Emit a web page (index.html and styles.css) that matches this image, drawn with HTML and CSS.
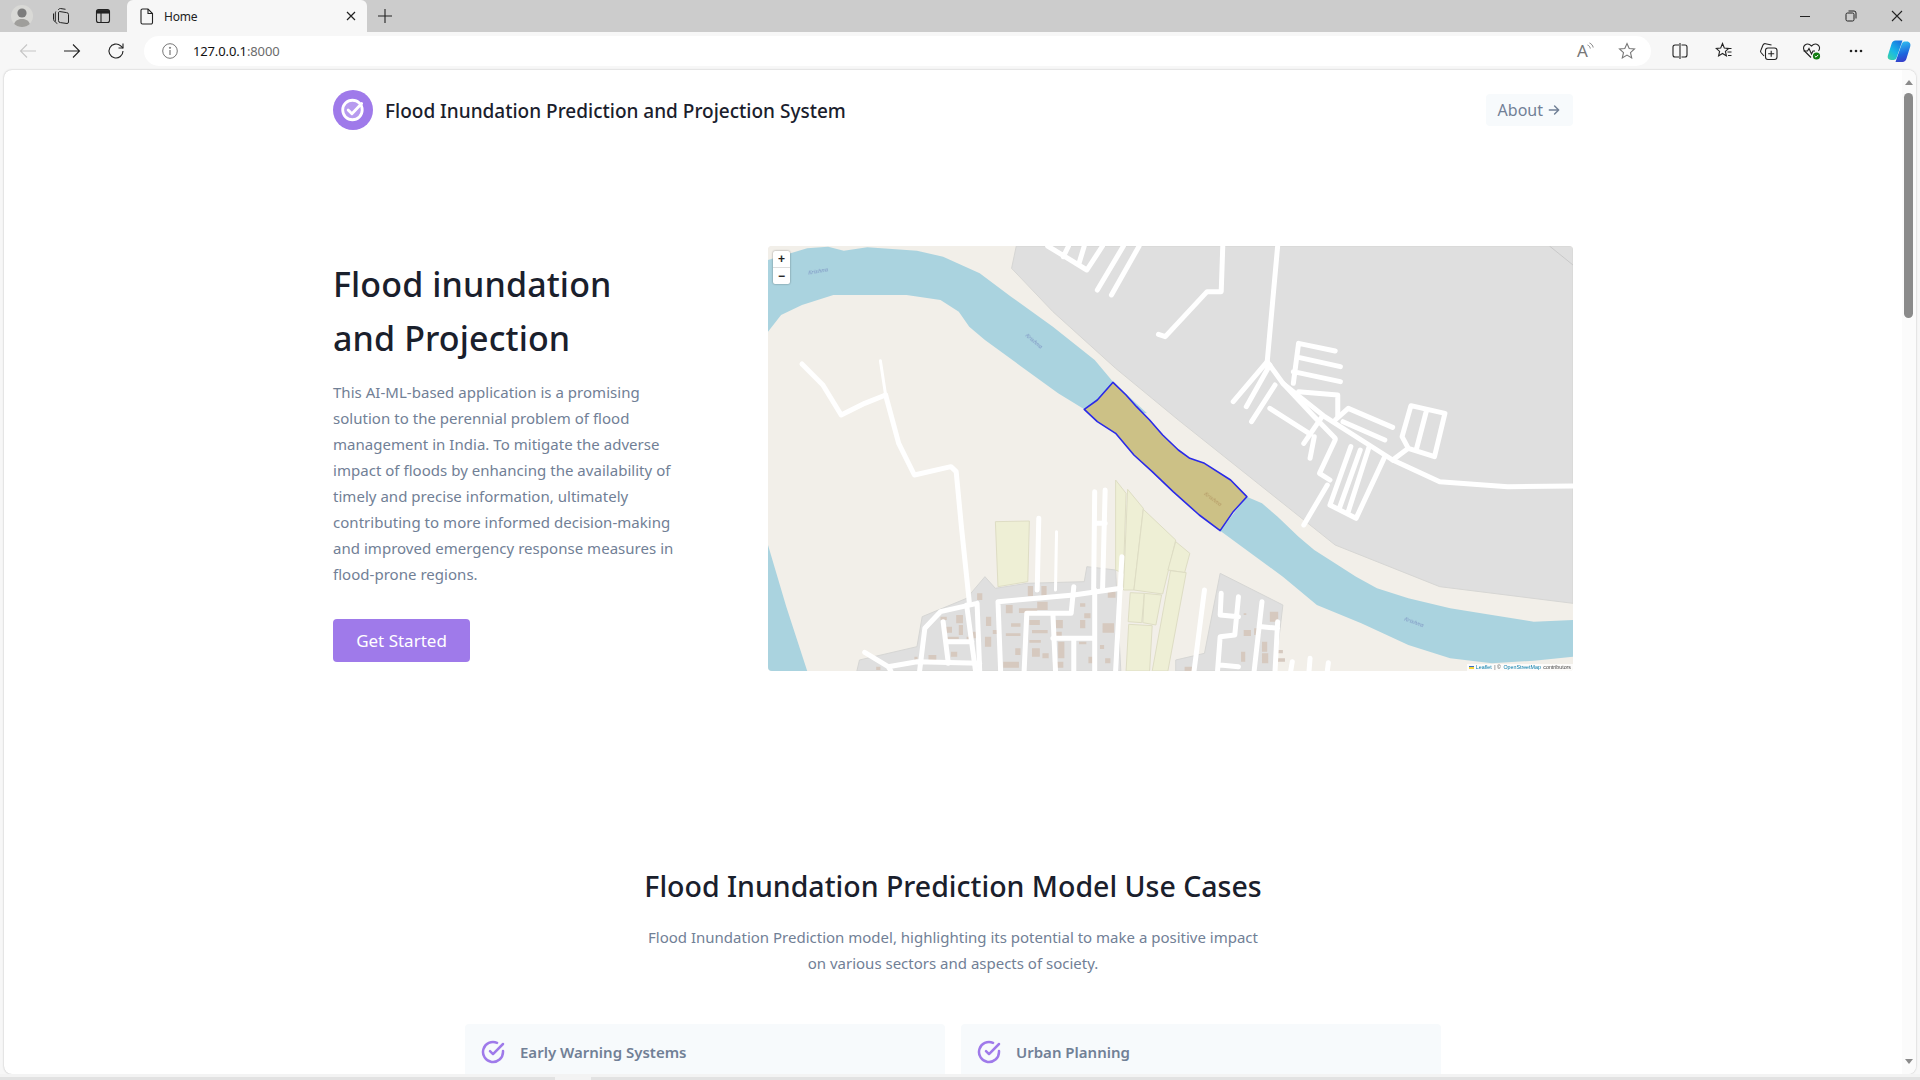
FILE: index.html
```html
<!DOCTYPE html>
<html lang="en">
<head>
<meta charset="utf-8">
<title>Home</title>
<link rel="stylesheet" href="styles.css">
</head>
<body>
<div class="browser">
  <div class="tabstrip">
    <div class="strip-btn">
      <svg width="24" height="24" viewBox="0 0 24 24"><circle cx="12" cy="12" r="11" fill="#d9d9d6"/><circle cx="12" cy="9" r="4.6" fill="#7c7c7c"/><path d="M4.2 20c1-3.6 4-5 7.800-5s6.800 1.400 7.800 5c-2 2-4.800 3-7.800 3s-5.800-1-7.800-3z" fill="#9f9e9b"/></svg>
    </div>
    <div class="strip-btn">
      <svg class="shift-left" width="18" height="18" viewBox="0 0 18 18" fill="none" stroke="#222" stroke-width="1"><path d="M1.500 6.500v6c0 1 .6 1.500 1.300 2M3.800 4.500c-.5 1-.5 1.500-.5 2.500v7.500c0 1 1 1.500 2 2"/><path d="M6.200 3c.5-1 1.300-1.500 2.300-1.500l5 .8"/><path d="M7.500 4.500l7 1.100a2 2 0 0 1 2 2v7.400a1.500 1.500 0 0 1-1.500 1.500l-6.500-.9a2 2 0 0 1-2-2V6a1.500 1.500 0 0 1 1-1.500z"/></svg>
    </div>
    <div class="strip-btn">
      <svg width="16" height="16" viewBox="0 0 16 16" fill="none" stroke="#222" stroke-width="1.100"><rect x="1.500" y="1.500" width="13" height="13" rx="2"/><path d="M2 3.800h12" stroke-width="3.500"/><path d="M6 5v9"/></svg>
    </div>
    <div class="tab">
      <svg class="tab-doc" width="14" height="17" viewBox="0 0 14 17" fill="none" stroke="#222" stroke-width="1.100"><path d="M2.500 1h5.500l4.500 4.500v9a1.500 1.500 0 0 1-1.500 1.500h-8.500a1.500 1.500 0 0 1-1.500-1.500v-12a1.500 1.500 0 0 1 1.500-1.500z"/><path d="M8 1v4.500h4.500"/></svg>
      <span class="tab-title">Home</span>
      <svg class="tab-close" width="10" height="10" viewBox="0 0 10 10" stroke="#222" stroke-width="1.200"><path d="M1 1l8 8M9 1l-8 8"/></svg>
    </div>
    <div class="newtab">
      <svg width="16" height="16" viewBox="0 0 16 16" stroke="#222" stroke-width="1.100"><path d="M8 1v14M1 8h14"/></svg>
    </div>
    <div class="winctl">
      <div class="win-btn"><svg width="12" height="12" viewBox="0 0 12 12" stroke="#222"><path d="M1 6.500h10"/></svg></div>
      <div class="win-btn"><svg width="12" height="12" viewBox="0 0 12 12" fill="none" stroke="#222"><rect x="1" y="3" width="8" height="8" rx="1.500"/><path d="M3.500 1h5.500a2 2 0 0 1 2 2v5.500"/></svg></div>
      <div class="win-btn"><svg width="12" height="12" viewBox="0 0 12 12" stroke="#222" stroke-width="1.100"><path d="M1 1l10 10M11 1l-10 10"/></svg></div>
    </div>
  </div>

  <div class="toolbar">
    <div class="nav">
      <div class="tool-btn"><svg width="18" height="18" viewBox="0 0 18 18" fill="none" stroke="#c6c6c6" stroke-width="1.100"><path d="M17 9H1.500M8 2.500 1.500 9 8 15.500"/></svg></div>
      <div class="tool-btn"><svg width="18" height="18" viewBox="0 0 18 18" fill="none" stroke="#222" stroke-width="1.100"><path d="M1 9h15.500M10 2.500 16.500 9 10 15.500"/></svg></div>
      <div class="tool-btn"><svg width="18" height="18" viewBox="0 0 18 18" fill="none" stroke="#222" stroke-width="1.100"><path d="M16 9a7 7 0 1 1-2.300-5.200L16 6"/><path d="M16 1.500V6h-4.500"/></svg></div>
    </div>
    <div class="address">
      <svg class="info" width="16" height="16" viewBox="0 0 16 16" fill="none" stroke="#777" stroke-width="1"><circle cx="8" cy="8" r="7.300"/><path d="M8 7v5" stroke-width="1.200"/><circle cx="8" cy="4.800" r=".6" fill="#777"/></svg>
      <span class="url">127.0.0.1<span class="url-port">:8000</span></span>
      <div class="addr-tools">
        <div class="aloud-wrap">
          <span class="aloud">A</span>
          <svg class="aloud-waves" width="8" height="9" viewBox="0 0 8 9" fill="none" stroke="#777" stroke-width=".9"><path d="M.5 3c1.500.5 2.500 1.800 2.800 3.500M2.500 1c2 .8 3.300 2.500 3.700 4.500"/></svg>
        </div>
        <svg width="18" height="18" viewBox="0 0 18 18" fill="none" stroke="#777" stroke-width="1.100"><path d="M9 1.500l2.200 5 5.300.5-4 3.600 1.200 5.300L9 13.100l-4.700 2.800 1.200-5.300-4-3.600 5.300-.5z"/></svg>
      </div>
    </div>
    <div class="tools">
      <div class="tool-btn"><svg width="16" height="16" viewBox="0 0 16 16" fill="none" stroke="#222" stroke-width="1.100"><path d="M7 2H3a2 2 0 0 0-2 2v8a2 2 0 0 0 2 2h4M9.500 2H13a2 2 0 0 1 2 2v8a2 2 0 0 1-2 2H9.500"/><path d="M8 0v16"/></svg></div>
      <div class="tool-btn"><svg width="18" height="18" viewBox="0 0 18 18" fill="none" stroke="#222" stroke-width="1.100"><path d="M7.500 1.500 9.300 6l4.400.4-3.300 3 1 4.500-3.900-2.400-3.900 2.400 1-4.500L1.200 6.400 5.700 6z"/><path d="M11.500 6.500h5M12.500 10h4M13 13.500h3.500"/></svg></div>
      <div class="tool-btn"><svg width="19" height="19" viewBox="0 0 19 19" fill="none" stroke="#222" stroke-width="1.100"><path d="M5 14 2 10.500a2 2 0 0 1 0-2.500L4 3c.5-1 1.500-1.500 2.500-1.300l6 1.300"/><rect x="6.500" y="6" width="11.500" height="11.500" rx="2.500"/><path d="M12.200 8.800v6M9.200 11.800h6"/></svg></div>
      <div class="tool-btn"><svg width="20" height="20" viewBox="0 0 20 20" fill="none"><path d="M9 16.500 3 10.500C1 8.500 1 5.500 3 4s4.500-1 6.500 1c2-2 4.500-2.500 6.500-1s2 4 .5 6" stroke="#222" stroke-width="1.100"/><path d="M1.500 10h4l1.500-2.500 2.500 5.500 1.500-3h2" stroke="#222" stroke-width="1.100"/><circle cx="14.500" cy="15" r="3.600" fill="#107c10"/><path d="M12.800 15l1.200 1.200 2.200-2.300" stroke="#fff" stroke-width="1"/></svg></div>
      <div class="tool-btn"><svg width="14" height="4" viewBox="0 0 14 4" fill="#222"><circle cx="2" cy="2" r="1.300"/><circle cx="7" cy="2" r="1.300"/><circle cx="12" cy="2" r="1.300"/></svg></div>
      <div class="tool-btn last">
        <svg width="24" height="24" viewBox="0 0 24 24">
          <defs>
            <linearGradient id="cpa" x1="0" y1="1" x2=".7" y2="0"><stop offset="0" stop-color="#3fd6a0"/><stop offset=".5" stop-color="#18b7e8"/><stop offset="1" stop-color="#1a78e0"/></linearGradient>
            <linearGradient id="cpb" x1=".4" y1="0" x2=".6" y2="1"><stop offset="0" stop-color="#2fc0f0"/><stop offset=".6" stop-color="#1d66de"/><stop offset="1" stop-color="#3b3bc8"/></linearGradient>
          </defs>
          <path d="M8.500 1.500h7L9.500 19c-.5 1.300-1.500 2-3 2H4C1.500 21 .2 19 .8 16.800L4.500 5c.6-2.200 2-3.500 4-3.500z" fill="url(#cpa)"/>
          <path d="M15.500 23h-7L14.500 5.500c.5-1.500 1.500-3 3-3h2.500c2.500 0 4 2.500 3.300 4.700L19.500 19.500c-.6 2.200-2 3.500-4 3.500z" fill="url(#cpb)"/>
        </svg>
      </div>
    </div>
  </div>

  <div class="frame">
    <div class="page">
      <main class="content">
        <div class="container">
          <header class="site-header">
            <div class="brand">
              <span class="logo">
                <svg width="26" height="26" viewBox="0 0 24 24" fill="none" stroke="#fff" stroke-width="2.600" stroke-linecap="round" stroke-linejoin="round"><circle cx="11.500" cy="12" r="9" fill="#fff" fill-opacity=".25"/><path d="M7.500 12l3.500 3.500L20 6"/></svg>
              </span>
              <span class="brand-name">Flood Inundation Prediction and Projection System</span>
            </div>
            <a class="about">About <svg width="14" height="14" viewBox="0 0 24 24" fill="none" stroke="#718096" stroke-width="2.500" stroke-linecap="round" stroke-linejoin="round"><path d="M4 12h16M13 5l7 7-7 7"/></svg></a>
          </header>

          <section class="hero">
            <div class="hero-copy">
              <h1>Flood inundation<br>and Projection</h1>
              <p>This AI-ML-based application is a promising<br>solution to the perennial problem of flood<br>management in India. To mitigate the adverse<br>impact of floods by enhancing the availability of<br>timely and precise information, ultimately<br>contributing to more informed decision-making<br>and improved emergency response measures in<br>flood-prone regions.</p>
              <a class="cta">Get Started</a>
            </div>
            <div class="map">
              <svg class="tiles" viewBox="15 18 1540 1275" preserveAspectRatio="none">
                <rect x="15" y="18" width="1540" height="1275" fill="#f2efe9"/>
                <g fill="#dfdfdf" stroke="#d6d6d4" stroke-width="1">
                  <path vector-effect="non-scaling-stroke" d="M490 18H1555V1090L1300 1040 1100 915 1000 790 800 540 680 385 560 215 481 85z"/>
                  <path vector-effect="non-scaling-stroke" d="M185 1293 190 1260 300 1220 310 1130 395 1075 430 1010 450 1045 510 1030 620 1025 625 980 680 990 690 1293z"/>
                  <path vector-effect="non-scaling-stroke" d="M880 1000 1000 1095 985 1293H795V1260L850 1240z"/>
                </g>
                <path vector-effect="non-scaling-stroke" d="M1510 18 1555 75" stroke="#c9c9c9" fill="none"/>
                <g fill="#aad3df">
                  <path d="M15 60 90 25 130 20 160 32 205 22 300 32 350 50 420 100 480 170 560 260 640 360 675 425 740 520 620 508 570 460 500 380 430 300 400 260 380 215 345 180 280 165 140 165 80 195 40 225 15 275z"/>
                  <path d="M931 770 960 790 990 830 1030 890 1060 930 1090 960 1140 1010 1180 1045 1240 1075 1320 1105 1400 1125 1480 1145 1555 1140V1250L1480 1262 1400 1270 1320 1255 1240 1215 1150 1150 1065 1095 1000 1010 880 872z"/>
                  <path d="M15 915 50 1100 90 1293H15z"/>
                </g>
                <g fill="#eeefd5" stroke="#deddc4">
                  <path vector-effect="non-scaling-stroke" d="M450 845 515 843 512 1025 455 1040z"/>
                  <path vector-effect="non-scaling-stroke" d="M680 720 700 760 695 1000 680 990z"/>
                  <path vector-effect="non-scaling-stroke" d="M703 748 733 805 715 1050 695 1050z"/>
                  <path vector-effect="non-scaling-stroke" d="M733 808 795 900 770 1062 715 1050z"/>
                  <path vector-effect="non-scaling-stroke" d="M795 905 822 940 812 998 780 990z"/>
                  <path vector-effect="non-scaling-stroke" d="M785 992 815 998 780 1293H750z"/>
                  <path vector-effect="non-scaling-stroke" d="M708 1058 735 1060 730 1148 704 1145z"/>
                  <path vector-effect="non-scaling-stroke" d="M735 1060 768 1065 757 1155 732 1148z"/>
                  <path vector-effect="non-scaling-stroke" d="M705 1153 750 1157 745 1293H700z"/>
                </g>
                <path fill="#d6c9bf" d="M512 1038h10v30h-10zM538 1038h10v30h-10zM470 1095h13v25h-13zM495 1105h35v14h-35zM530 1085h20v25h-20zM415 1060h10v20h-10zM375 1125h13v25h-13zM345 1130h12v10h-12zM355 1160h12v18h-12zM380 1155h8v30h-8zM350 1190h30v8h-30zM322 1245h15v15h-15zM365 1235h12v15h-12zM405 1175h10v20h-10zM432 1130h10v28h-10zM430 1190h12v30h-12zM470 1180h28v8h-28zM480 1150h18v10h-18zM465 1265h30v18h-30zM515 1140h20v15h-20zM520 1170h30v10h-30zM515 1200h22v8h-22zM520 1225h15v25h-15zM565 1140h14v25h-14zM565 1175h12v15h-12zM570 1205h12v50h-12zM560 1265h20v18h-20zM612 1090h10v10h-10zM612 1140h10v25h-10zM620 1120h12v15h-12zM655 1150h22v28h-22zM650 1215h8v12h-8zM610 1205h14v8h-14zM665 1055h15v18h-15zM660 1255h10v15h-10zM925 1170h14v18h-14zM945 1165h12v20h-12zM975 1115h16v30h-16zM925 1120h5v5h-5zM960 1205h10v30h-10zM960 1240h12v30h-12zM990 1230h10v10h-10zM990 1255h14v10h-14zM920 1235h8v30h-8zM812 1280h15v13h-15zM295 1250h6v12h-6zM222 1280h8v10h-8zM395 1190h8v12h-8zM445 1170h10v12h-10zM488 1225h10v20h-10zM540 1240h12v15h-12zM628 1250h8v20h-8z"/>
                <g class="roads">
                  <path d="M80 372 120 435 155 525 200 490 240 465"/>
                  <path class="thin" d="M230 362 240 465"/>
                  <path d="M240 465 265 610 295 705 365 680 375 695 385 860 400 1085"/>
                  <path d="M885 18 882 155H855L775 290 762 283"/>
                  <path d="M990 18 970 365"/>
                  <path d="M550 18 625 90 655 18M590 18 580 50M620 18 610 70"/>
                  <path d="M725 18 672 165M695 18 645 150"/>
                  <path d="M970 365 905 485M975 375 930 500M985 435 940 545M975 505 1050 580"/>
                  <path d="M970 365 1000 430 1080 530 1150 600 1210 660 1300 725 1430 740 1555 738"/>
                  <path d="M1100 333 1030 310 1020 430M1030 352 1110 380M1020 395 1110 425"/>
                  <path d="M1030 455 1105 465V530M1000 430 1060 530 1100 595"/>
                  <path d="M1210 562 1125 505 1100 540M1115 545 1195 600"/>
                  <path d="M1245 497 1310 520 1290 650 1240 625 1228 590zM1275 510 1255 630M1240 625 1210 660"/>
                  <path d="M1075 530 1040 610M1060 590 1052 655M1100 600 1070 700 1090 720"/>
                  <path d="M1130 620 1090 795 1140 835 1195 650M1165 620 1125 815M1148 630 1108 805M1085 735 1040 855"/>
                  <path d="M640 755 638 1050M660 750 655 1050M640 850H660"/>
                  <path d="M533 835 530 1050"/>
                  <path class="thin" d="M567 875 565 1050"/>
                  <path d="M692 950 680 1293"/>
                  <path d="M455 1085 600 1065 690 1045M455 1085 460 1293M415 1090 420 1293M415 1090 345 1115 315 1165 305 1293"/>
                  <path d="M350 1145 360 1270M395 1095 412 1293M360 1205H405"/>
                  <path d="M245 1280 300 1265 420 1270M200 1237 245 1280 250 1293"/>
                  <path d="M510 1120H560L565 1293M510 1120 505 1293M600 1040 595 1120H560M560 1195H640M600 1195V1293M640 1050V1293"/>
                  <path d="M850 1050 830 1293M882 1060 880 1125 915 1130M915 1070 908 1185 880 1190 875 1293M880 1275 915 1280M960 1085 945 1293M960 1160 990 1165M990 1145 985 1293M1018 1265 1015 1293M1052 1255 1050 1293M1087 1268 1085 1293"/>
                </g>
                <path vector-effect="non-scaling-stroke" fill="#ccc186" stroke="#2a2ae8" stroke-width="1.600" stroke-linejoin="round" d="M675 427 700 465 720 500 745 540 770 585 800 630 822 655 850 670 900 720 931 770 905 815 880 872 840 825 790 755 750 695 715 645 680 580 645 545 620 508 645 480z"/>
              </svg>
              <span class="river r1">Krishna</span>
              <span class="river r2">Krishna</span>
              <span class="river r3">Krishna</span>
              <span class="river r4">Krishna</span>
              <div class="zoom-ctl"><span class="zoom-btn zoom-in">+</span><span class="zoom-btn">−</span></div>
              <div class="attrib"><span class="flag"></span><span class="attr-link">Leaflet</span> | © <span class="attr-link">OpenStreetMap</span> contributors</div>
            </div>
          </section>

          <section class="usecases">
            <h2>Flood Inundation Prediction Model Use Cases</h2>
            <p>Flood Inundation Prediction model, highlighting its potential to make a positive impact<br>on various sectors and aspects of society.</p>
            <div class="cards">
              <div class="card">
                <svg width="24" height="24" viewBox="0 0 24 24" fill="none" stroke="#9f7aea" stroke-width="2.500" stroke-linecap="round" stroke-linejoin="round"><path d="M22 11.080V12a10 10 0 1 1-5.930-9.140"/><path d="M22 4 12 14.010l-3-3"/></svg>
                <span>Early Warning Systems</span>
              </div>
              <div class="card">
                <svg width="24" height="24" viewBox="0 0 24 24" fill="none" stroke="#9f7aea" stroke-width="2.500" stroke-linecap="round" stroke-linejoin="round"><path d="M22 11.080V12a10 10 0 1 1-5.930-9.140"/><path d="M22 4 12 14.010l-3-3"/></svg>
                <span>Urban Planning</span>
              </div>
            </div>
          </section>
        </div>
      </main>
      <div class="scrollbar">
        <span class="arrow-up"></span>
        <span class="thumb"></span>
        <span class="arrow-down"></span>
      </div>
    </div>
    <div class="bottom-strip"><div class="bottom-bar"><span class="bottom-mark"></span></div></div>
  </div>
</div>
</body>
</html>
```

FILE: styles.css
```css
* { box-sizing: border-box; }
html, body { margin: 0; height: 100%; overflow: hidden; }
body { font-family: "Noto Sans", "Open Sans", sans-serif; color: #1a202c; background: #f7f7f7; }
.browser { width: 1920px; height: 1080px; display: flex; flex-direction: column; }

/* tab strip */
.tabstrip { height: 32px; background: #cccccc; display: flex; align-items: stretch; padding-left: 2px; flex: none; }
.strip-btn { width: 40.500px; display: flex; align-items: center; justify-content: center; }
.shift-left { margin-right: 3px; }
.tab { width: 240px; margin-left: 3.500px; background: #f7f7f7; border-radius: 6px 6px 0 0; display: flex; align-items: center; padding: 0 11px 0 13px; }
.tab-title { font-size: 12px; margin-left: 10px; flex: 1; color: #222; letter-spacing: -.2px; }
.newtab { width: 36px; display: flex; align-items: center; justify-content: center; }
.winctl { margin-left: auto; display: flex; }
.win-btn { width: 46px; display: flex; align-items: center; justify-content: center; }

/* toolbar */
.toolbar { height: 38px; background: #f7f7f7; display: flex; align-items: center; flex: none; padding-left: 6px; }
.nav { display: flex; width: 138px; }
.tool-btn { width: 44px; height: 30px; display: flex; align-items: center; justify-content: center; flex: none; }
.tool-btn.last { width: 42px; }
.address { width: 1508px; height: 30px; background: #fff; border-radius: 15px; display: flex; align-items: center; padding-left: 18px; }
.url { font-size: 13px; margin-left: 15px; color: #111; letter-spacing: -.12px; }
.url-port { color: #6b6b6b; }
.addr-tools { margin-left: auto; display: flex; align-items: center; gap: 21px; padding-right: 15px; }
.aloud-wrap { width: 20px; height: 24px; display: flex; align-items: flex-start; }
.aloud { font-size: 17px; line-height: 24px; color: #777; }
.aloud-waves { margin: 3px 0 0 -1px; }
.tools { display: flex; margin-left: 7px; }

/* page frame */
.frame { flex: 1; display: flex; flex-direction: column; padding: 0 4px; min-height: 0; background: #f7f7f7; }
.page { flex: 1; min-height: 0; background: #fff; border-radius: 8px; display: flex; box-shadow: 0 0 2px rgba(0,0,0,.28); overflow: hidden; }
.content { flex: 1; min-width: 0; overflow: hidden; }
.scrollbar { width: 14px; flex: none; background: #fbfbfb; display: flex; flex-direction: column; align-items: center; padding: 10px 3px 10px 2px; }
.arrow-up { width: 0; height: 0; border-left: 4.500px solid transparent; border-right: 4.500px solid transparent; border-bottom: 5px solid #8b8b8b; }
.thumb { width: 9px; height: 225px; background: #8b8b8b; border-radius: 5px; margin-top: 8px; }
.arrow-down { width: 0; height: 0; border-left: 4.500px solid transparent; border-right: 4.500px solid transparent; border-top: 5px solid #8b8b8b; margin-top: auto; }
.bottom-strip { height: 6px; flex: none; margin: 0 -4px; padding-top: 3px; background: #f3f3f3; }
.bottom-bar { height: 3px; background: #e2e2e2; }
.bottom-mark { display: block; width: 36px; height: 3px; margin-left: 555px; background: #f3f3f3; }

/* site */
.container { width: 1240px; margin: 0 auto; }
.site-header { display: flex; align-items: center; justify-content: space-between; padding-top: 20px; }
.brand { display: flex; align-items: center; gap: 12px; }
.logo { width: 40px; height: 40px; border-radius: 50%; background: #9f7aea; display: flex; align-items: center; justify-content: center; }
.brand-name { font-size: 19px; font-weight: 500; padding-top: 2px; }
.about { display: flex; align-items: center; gap: 4px; height: 32px; padding: 0 12px; background: #f7fafc; border-radius: 4px; font-size: 16px; color: #718096; }

.hero { display: flex; justify-content: space-between; align-items: center; margin-top: 116px; height: 425px; }
.hero-copy { width: 400px; padding-top: 2px; }
h1 { margin: 0 0 14px; font-size: 34px; line-height: 54px; font-weight: 500; white-space: nowrap; letter-spacing: .12px; }
.hero-copy p { margin: 0 0 32px; font-size: 15px; line-height: 26px; color: #718096; white-space: nowrap; letter-spacing: .03px; }
.cta { display: inline-flex; align-items: center; justify-content: center; width: 137px; height: 43px; background: #9f7aea; color: #fff; font-size: 17px; border-radius: 4px; }

.map { position: relative; width: 805px; height: 425px; border-radius: 4px; overflow: hidden; flex: none; background: #f2efe9; }
.tiles { display: block; width: 100%; height: 100%; filter: blur(.5px); }
.roads { fill: none; stroke: #fff; stroke-linecap: round; stroke-linejoin: round; }
.roads path { stroke-width: 5px; vector-effect: non-scaling-stroke; }
.roads path.thin { stroke-width: 3px; }
.river { position: absolute; font-size: 6px; font-style: italic; color: #7f97c4; filter: blur(.3px); }
.r1 { left: 40px; top: 21px; transform: rotate(-10deg); }
.r2 { left: 256px; top: 91px; transform: rotate(40deg); }
.r3 { left: 435px; top: 249px; transform: rotate(36deg); color: #b59a66; }
.r4 { left: 636px; top: 372px; transform: rotate(20deg); }
.zoom-ctl { position: absolute; left: 5px; top: 5px; width: 17px; display: flex; flex-direction: column; background: #fff; border-radius: 2px; box-shadow: 0 0 2px rgba(0,0,0,.45); }
.zoom-btn { height: 16.500px; display: flex; align-items: center; justify-content: center; font: 700 12px "Liberation Sans", sans-serif; color: #222; }
.zoom-in { border-bottom: 1px solid #ddd; }
.attrib { position: absolute; right: 0; bottom: 0; height: 7px; padding: 0 2px; display: flex; align-items: center; gap: 1px; white-space: pre; font: 5.300px/7px "Liberation Sans", sans-serif; color: #444; background: rgba(255,255,255,.8); filter: blur(.25px); }
.flag { width: 5px; height: 3.500px; margin-right: 1px; background: linear-gradient(#3a6cc0 50%, #f6d53b 50%); }
.attr-link { color: #0078a8; }

.usecases { margin-top: 193px; text-align: center; }
h2 { margin: 0 0 15px; font-size: 28.500px; line-height: 45px; font-weight: 500; }
.usecases p { margin: 0 0 48px; font-size: 15px; line-height: 26px; color: #718096; }
.cards { display: flex; justify-content: center; gap: 16px; }
.card { width: 480px; height: 56px; padding: 16px; background: #f7fafc; border-radius: 4px; display: flex; align-items: center; gap: 15px; text-align: left; font-size: 15px; font-weight: 600; color: #718096; }
.card svg { flex: none; }
```
